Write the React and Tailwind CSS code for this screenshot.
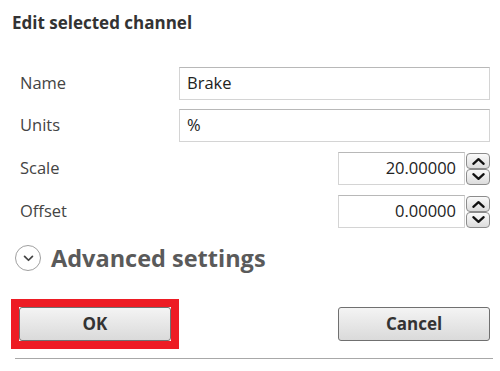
import React from "react";

function Chevron({ up, className = "" }) {
  return (
    <svg viewBox="0 0 16 10" className={className}>
      <path
        d={up ? "M2.5 8 L8 3 L13.5 8" : "M2.5 2 L8 7 L13.5 2"}
        fill="none"
        stroke="#111"
        strokeWidth="2.4"
        strokeLinecap="round"
        strokeLinejoin="round"
      />
    </svg>
  );
}

function Spinner() {
  return (
    <div className="flex flex-col w-[24px] ml-[1px]">
      <div className="h-[16px] rounded-[4px] border border-[#8c8c8c] bg-gradient-to-b from-[#fafafa] to-[#dcdcdc] flex items-center justify-center">
        <Chevron up className="w-[15px] h-[10px]" />
      </div>
      <div className="h-[16px] rounded-[4px] border border-[#8c8c8c] bg-gradient-to-b from-[#fafafa] to-[#dcdcdc] flex items-center justify-center">
        <Chevron className="w-[15px] h-[10px]" />
      </div>
    </div>
  );
}

function Field({ value, align = "left", className = "" }) {
  return (
    <div
      className={`h-[33px] border border-[#d4d4d4] border-t-[#b8b8b8] bg-white flex items-center text-[16.5px] text-[#222] ${
        align === "right" ? "justify-end pr-[8px]" : "px-[7px]"
      } ${className}`}
    >
      {value}
    </div>
  );
}

export default function App() {
  return (
    <div
      className="w-[500px] h-[371px] bg-white relative overflow-hidden"
      style={{ fontFamily: '"Open Sans", "Noto Sans", sans-serif' }}
    >
      <div className="pl-[12px] pt-[11px] text-[17px] leading-[24px] font-bold text-[#333]">
        Edit selected channel
      </div>

      <div className="mt-[32px] pl-[20px] pr-[10px] flex flex-col gap-[9px] text-[16.5px] text-[#444]">
        <div className="flex items-center">
          <div className="w-[159px]">Name</div>
          <Field value="Brake" className="flex-1" />
        </div>
        <div className="flex items-center">
          <div className="w-[159px]">Units</div>
          <Field value="%" className="flex-1" />
        </div>
        <div className="flex items-center mt-[1px]">
          <div className="flex-1">Scale</div>
          <Field value="20.00000" align="right" className="w-[127px]" />
          <Spinner />
        </div>
        <div className="flex items-center mt-[1px]">
          <div className="flex-1">Offset</div>
          <Field value="0.00000" align="right" className="w-[127px]" />
          <Spinner />
        </div>
      </div>

      <div className="mt-[15px] pl-[15px] flex items-center gap-[10px]">
        <div className="w-[26px] h-[26px] rounded-full border-[1.5px] border-[#a0a0a0] flex items-center justify-center">
          <svg viewBox="0 0 12 8" className="w-[11px] h-[7px]">
            <path d="M1.5 1.5 L6 6 L10.5 1.5" fill="none" stroke="#444" strokeWidth="2" strokeLinecap="round" strokeLinejoin="round" />
          </svg>
        </div>
        <div className="text-[23.5px] leading-[30px] font-bold text-[#5a5a5a]">Advanced settings</div>
      </div>

      <div className="mt-[26px] pl-[11px] pr-[10px] flex items-center justify-between">
        <div className="border-[8px] border-[#ed1c24]">
          <div className="w-[152px] h-[34px] rounded-[3px] border border-[#707070] bg-gradient-to-b from-[#f4f4f4] to-[#dadada] flex items-center justify-center text-[17px] font-bold text-[#333]">
            OK
          </div>
        </div>
        <div className="w-[152px] h-[34px] rounded-[3px] border border-[#707070] bg-gradient-to-b from-[#f4f4f4] to-[#dadada] flex items-center justify-center text-[17px] font-bold text-[#333]">
          Cancel
        </div>
      </div>

      <div className="mt-[9px] ml-[15px] mr-[7px] border-t border-[#a8a8a8]" />
    </div>
  );
}
